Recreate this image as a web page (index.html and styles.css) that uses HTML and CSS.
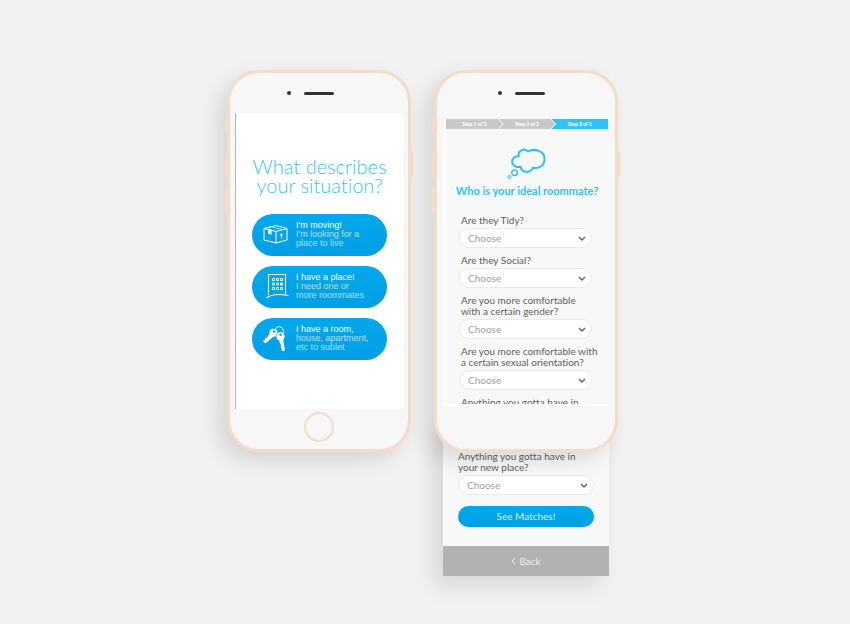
FILE: index.html
```html
<!DOCTYPE html>
<html lang="en">
<head>
<meta charset="utf-8">
<title>Roommate finder</title>
<link rel="stylesheet" href="styles.css">
</head>
<body>
<main class="stage">
  <section class="device">
    <div class="phone">
      <i class="key key-mute"></i><i class="key key-up"></i><i class="key key-down"></i><i class="key key-power"></i>
      <div class="speaker"><i class="camera"></i><i class="slot"></i></div>
      <div class="screen welcome">
        <h1>What describes<br>your situation?</h1>
        <button class="choice" type="button">
          <svg viewBox="0 0 28 24" fill="none" stroke="#fff" stroke-linejoin="round">
            <path d="M2 6.500 14 9.500V21L2 18ZM14 9.500 25 6.500V18L14 21M2 6.500 14 3.500 25 6.500"/>
            <path d="M5.500 5.700 9.500 4.700 20 7.600" stroke-width=".6"/>
            <path d="M6 6.500 9.500 7.600V13L8 11.800 6 12Z" fill="#fff" stroke="none"/>
            <path d="M19.500 17v-5M18 13.800l1.500-2 1.600 1.300"/>
          </svg>
          <span class="words"><strong>I'm moving!</strong><span>I'm looking for a<br>place to live</span></span>
        </button>
        <button class="choice" type="button">
          <svg viewBox="0 0 28 28" fill="none" stroke="#fff">
            <path d="M6.500 23V2.500h17V23M4.500 26c5-4 14-4 22-2.500" stroke-width="1.100"/>
            <path d="M10.500 6.500h2v2h-2zM14.500 6.500h2v2h-2zM18.500 6.500h2v2h-2zM10.500 11h2v2h-2zM14.500 11h2v2h-2zM10.500 15.500h2v2h-2zM14.500 15.500h2v2h-2zM18.500 15.500h2v2h-2z" stroke-width=".9"/>
            <path d="M18.500 11h2v2h-2z" fill="#fff"/>
          </svg>
          <span class="words"><strong>I have a place!</strong><span>I need one or<br>more roommates</span></span>
        </button>
        <button class="choice" type="button">
          <svg viewBox="0 0 28 28" fill="none" stroke="#fff">
            <path d="M12.500 7C13.500 1 22 1 21.500 9"/>
            <circle cx="11.500" cy="8.800" r="4" fill="#fff" stroke="none"/>
            <path d="M7.500 9.500l4 3-7.500 6.500-2-.5-.8-2.200 1.800-.6.200-1.600 1.700-.4z" fill="#fff" stroke="none"/>
            <circle cx="18.500" cy="12.500" r="4.800" fill="#03a2e8" stroke="none"/>
            <circle cx="18.500" cy="12.500" r="4.200" fill="#fff" stroke="none"/>
            <path d="M16.500 15.500l4.500-.2 2 10.700-1.700 1.200-1.900-1.200.4-1.500-1.200-1.300.5-1.500z" fill="#fff" stroke="none"/>
            <circle cx="12" cy="7.500" r="1.200" fill="#03a2e8" stroke="none"/>
            <circle cx="18.500" cy="10.800" r="1.200" fill="#03a2e8" stroke="none"/>
          </svg>
          <span class="words"><strong>I have a room,</strong><span>house, apartment,<br>etc to sublet</span></span>
        </button>
      </div>
      <button class="home" type="button" aria-label="Home"></button>
    </div>
  </section>

  <section class="device">
    <div class="phone">
      <i class="key key-mute"></i><i class="key key-up"></i><i class="key key-down"></i><i class="key key-power"></i>
      <div class="speaker"><i class="camera"></i><i class="slot"></i></div>
      <div class="screen survey">
        <ol class="steps">
          <li class="current">Step 3 of 3</li>
          <li>Step 2 of 3</li>
          <li>Step 1 of 3</li>
        </ol>
        <svg class="cloud" viewBox="0 0 40 32" fill="none" stroke="#27c0fa" stroke-width="2">
          <path d="M11.600 9.300C10.800 3 17.500.600 21 4.400C28 .800 37.500 4.200 37.500 12C37.500 19 31.500 22 25.800 20.800C24 26.200 15 26.600 13.600 19.800C9.500 20.800 5.200 18.500 5.200 14.500C5.200 11 8 9 11.600 9.300Z"/>
          <circle cx="7.500" cy="25.700" r="2.800" stroke-width="1.400"/>
          <circle cx="2.500" cy="30" r="1.500" stroke-width="1"/>
        </svg>
        <h2>Who is your ideal roommate?</h2>
        <div class="fields">
          <div class="field"><label for="tidy">Are they Tidy?</label><span class="pick"><select id="tidy"><option>Choose</option></select><svg viewBox="0 0 8 6"><path d="M1 1l3 3 3-3"/></svg></span></div>
          <div class="field"><label for="social">Are they Social?</label><span class="pick"><select id="social"><option>Choose</option></select><svg viewBox="0 0 8 6"><path d="M1 1l3 3 3-3"/></svg></span></div>
          <div class="field"><label for="gender">Are you more comfortable<br>with a certain gender?</label><span class="pick"><select id="gender"><option>Choose</option></select><svg viewBox="0 0 8 6"><path d="M1 1l3 3 3-3"/></svg></span></div>
          <div class="field"><label for="orientation">Are you more comfortable with<br>a certain sexual orientation?</label><span class="pick"><select id="orientation"><option>Choose</option></select><svg viewBox="0 0 8 6"><path d="M1 1l3 3 3-3"/></svg></span></div>
          <p class="peek">Anything you gotta have in</p>
        </div>
      </div>
    </div>
    <div class="sheet">
      <div class="sheet-body">
        <div class="field"><label for="place">Anything you gotta have in<br>your new place?</label><span class="pick"><select id="place"><option>Choose</option></select><svg viewBox="0 0 8 6"><path d="M1 1l3 3 3-3"/></svg></span></div>
        <button class="submit" type="button">See Matches!</button>
      </div>
      <button class="back" type="button"><svg viewBox="0 0 5 8"><path d="M4 1L1 4l3 3"/></svg>Back</button>
    </div>
  </section>
</main>
</body>
</html>
```
FILE: styles.css
```css
* {
  box-sizing: border-box;
}

body {
  margin: 0;
  min-height: 100vh;
  background: #f2f2f2;
  color: #606060;
  font-family: Lato, "Liberation Sans", sans-serif;
  font-size: 10px;
  font-variant-ligatures: none;
  line-height: 11px;
}

h1,
h2,
p,
ol {
  margin: 0;
  padding: 0;
}

button,
select {
  border: 0;
  font: inherit;
}

.stage {
  display: flex;
  justify-content: center;
  align-items: flex-start;
  gap: 23px;
  padding: 70px 5px 48px 0;
}

.device {
  width: 184px;
}

.phone {
  position: relative;
  z-index: 1;
  display: flex;
  flex-direction: column;
  height: 382px;
  padding: 0 5px;
  border: 3px solid #f5dcc6;
  border-radius: 32px;
  background: #f7f7f7;
  box-shadow: -9px 9px 22px rgba(0, 0, 0, 0.12);
}

.key {
  position: absolute;
  left: -5px;
  width: 2px;
  height: 26px;
  border-radius: 2px 0 0 2px;
  background: #f5dcc6;
}

.key-mute {
  top: 44px;
  height: 15px;
}

.key-up {
  top: 79px;
}

.key-down {
  top: 114px;
}

.key-power {
  top: 78px;
  right: -5px;
  left: auto;
}

.speaker {
  display: flex;
  flex: none;
  align-items: center;
  justify-content: center;
  gap: 13px;
  height: 40px;
  padding-right: 17px;
}

.camera {
  width: 4px;
  height: 4px;
  border-radius: 50%;
  background: #333;
}

.slot {
  width: 30px;
  height: 3px;
  border-radius: 2px;
  background: #333;
}

.device + .device .speaker {
  padding-right: 9px;
}

.welcome {
  display: flex;
  flex-direction: column;
  align-items: center;
  gap: 10px;
  height: 296px;
  padding-top: 44px;
  border-left: 1px solid #b5b5b5;
  background: #fff;
}

.welcome h1 {
  margin-bottom: 9px;
  color: #3cc3f8;
  font-size: 20px;
  font-weight: 300;
  line-height: 19px;
  text-align: center;
}

.choice {
  display: flex;
  align-items: center;
  gap: 6px;
  width: 135px;
  height: 42px;
  padding: 0 0 2px 10px;
  border-radius: 21px;
  background: linear-gradient(#04a9ea, #009ee6);
  color: #b0e1f9;
  font-family: "Liberation Sans", sans-serif;
  font-size: 9px;
  line-height: 9px;
  text-align: left;
}

.choice svg {
  flex: none;
  width: 28px;
  height: 28px;
}

.words {
  white-space: nowrap;
}

.words strong {
  display: block;
  color: #fff;
  font-weight: 400;
}

.home {
  align-self: center;
  width: 30px;
  height: 30px;
  margin-top: 3px;
  border: 2px solid #f5dcc6;
  border-radius: 50%;
  background: none;
}

.survey {
  display: flex;
  flex-direction: column;
  align-items: center;
  max-height: 287px;
  margin: 6px 2px 0 1px;
  overflow: hidden;
  border: solid #fff;
  border-width: 0 0 2px 3px;
  background: #f7f9f9;
}

.steps {
  display: flex;
  flex: none;
  flex-direction: row-reverse;
  width: 100%;
  height: 10px;
  background: #fff;
  color: #fff;
  font-size: 5px;
  font-weight: 900;
  line-height: 10px;
  list-style: none;
  text-align: center;
}

.steps li {
  flex: 1;
  margin-left: -4px;
  background: #c8c8c8;
  clip-path: polygon(0 0, calc(100% - 5px) 0, 100% 50%, calc(100% - 5px) 100%, 0 100%, 5px 50%);
}

.steps li.current {
  background: #2fc2fc;
  clip-path: polygon(0 0, 100% 0, 100% 100%, 0 100%, 5px 50%);
}

.steps li:last-child {
  margin-left: 0;
  clip-path: polygon(0 0, calc(100% - 5px) 0, 100% 50%, calc(100% - 5px) 100%, 0 100%);
}

.cloud {
  flex: none;
  width: 40px;
  height: 32px;
  margin: 18px 0 6px;
}

.survey h2 {
  color: #2fc2fc;
  font-size: 11px;
  font-weight: 700;
  line-height: 12px;
  white-space: nowrap;
}

.fields {
  display: flex;
  flex: none;
  flex-direction: column;
  gap: 7px;
  align-self: stretch;
  padding: 18px 16px 0 13px;
}

.field {
  display: flex;
  flex-direction: column;
  gap: 2px;
}

.field label,
.peek {
  padding-left: 2px;
  white-space: nowrap;
}

.pick {
  position: relative;
  display: block;
}

.pick select {
  display: block;
  width: 100%;
  height: 20px;
  padding: 0 20px 0 8px;
  appearance: none;
  border: 1px solid #e8eaea;
  border-radius: 10px;
  background: #fff;
  color: #a0a0a0;
}

.pick svg {
  position: absolute;
  top: 8px;
  right: 6px;
  width: 8px;
  height: 6px;
  fill: none;
  stroke: #666;
  stroke-width: 1.500;
  pointer-events: none;
}

.sheet {
  margin: -30px 9px 0;
  background: #f7f9f9;
  box-shadow: -9px 9px 22px rgba(0, 0, 0, 0.12);
}

.sheet-body {
  display: flex;
  flex-direction: column;
  gap: 11px;
  padding: 29px 15px 19px;
}

.sheet .field label {
  padding-left: 0;
}

.submit {
  height: 21px;
  padding: 0;
  border-radius: 11px;
  background: linear-gradient(#04a9ea, #009ee6);
  color: #d9f2fc;
}

.back {
  display: flex;
  align-items: center;
  justify-content: center;
  gap: 3px;
  width: 100%;
  height: 30px;
  background: #b2b2b2;
  color: #eee;
}

.back svg {
  width: 5px;
  height: 8px;
  fill: none;
  stroke: #eee;
}
```
